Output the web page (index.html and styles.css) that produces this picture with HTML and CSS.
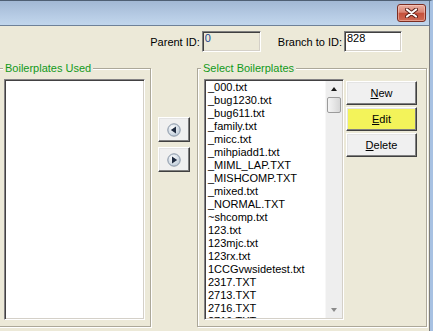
FILE: index.html
```html
<!DOCTYPE html>
<html lang="en">
<head>
    <meta charset="UTF-8">
    <title>Boilerplates</title>
    <link rel="stylesheet" href="styles.css">
</head>
<body>
<div class="window">
    <div class="titlebar">
        <button class="close" title="Close">
            <svg width="13" height="10" viewBox="0 0 13 10">
                <path d="M2 1.5 L11 8.5 M11 1.5 L2 8.5" stroke="#5a1e16" stroke-width="4" stroke-linecap="round"/>
                <path d="M2 1.5 L11 8.5 M11 1.5 L2 8.5" stroke="#ffffff" stroke-width="2.2" stroke-linecap="round"/>
            </svg>
        </button>
    </div>
    <div class="client">
        <div class="idrow">
            <label for="parentId">Parent ID:</label>
            <input type="text" id="parentId" class="idbox parent" value="0" readonly>
            <label for="branchId" class="branch-label">Branch to ID:</label>
            <input type="text" id="branchId" class="idbox branch" value="828">
        </div>
        <div class="groups">
            <fieldset class="group used">
                <legend>Boilerplates Used</legend>
                <div class="listbox"></div>
            </fieldset>
            <div class="movers">
                <button class="mover">
                    <svg width="14" height="14" viewBox="0 0 14 14">
                        <defs>
                            <radialGradient id="ball1" cx="0.4" cy="0.35" r="0.7">
                                <stop offset="0" stop-color="#ffffff"/>
                                <stop offset="1" stop-color="#b9c7d6"/>
                            </radialGradient>
                        </defs>
                        <circle cx="7" cy="7" r="6.2" fill="url(#ball1)" stroke="#8895a5"/>
                        <path d="M3.8 7 L9 3.6 L9 10.4 Z" fill="#1f2b40"/>
                    </svg>
                </button>
                <button class="mover">
                    <svg width="14" height="14" viewBox="0 0 14 14">
                        <defs>
                            <radialGradient id="ball2" cx="0.4" cy="0.35" r="0.7">
                                <stop offset="0" stop-color="#ffffff"/>
                                <stop offset="1" stop-color="#b9c7d6"/>
                            </radialGradient>
                        </defs>
                        <circle cx="7" cy="7" r="6.2" fill="url(#ball2)" stroke="#8895a5"/>
                        <path d="M10.2 7 L5 3.6 L5 10.4 Z" fill="#1f2b40"/>
                    </svg>
                </button>
            </div>
            <fieldset class="group select">
                <legend>Select Boilerplates</legend>
                <div class="group-body">
                    <div class="listbox files">
                        <ul class="items">
                            <li>_000.txt</li>
                            <li>_bug1230.txt</li>
                            <li>_bug611.txt</li>
                            <li>_family.txt</li>
                            <li>_micc.txt</li>
                            <li>_mihpiadd1.txt</li>
                            <li>_MIML_LAP.TXT</li>
                            <li>_MISHCOMP.TXT</li>
                            <li>_mixed.txt</li>
                            <li>_NORMAL.TXT</li>
                            <li>~shcomp.txt</li>
                            <li>123.txt</li>
                            <li>123mjc.txt</li>
                            <li>123rx.txt</li>
                            <li>1CCGvwsidetest.txt</li>
                            <li>2317.TXT</li>
                            <li>2713.TXT</li>
                            <li>2716.TXT</li>
                            <li>2719.TXT</li>
                        </ul>
                        <div class="scroll">
                            <div class="arrow up"></div>
                            <div class="thumb"></div>
                            <div class="track"></div>
                            <div class="arrow down"></div>
                        </div>
                    </div>
                    <div class="actions">
                        <button class="btn"><u>N</u>ew</button>
                        <button class="btn edit"><u>E</u>dit</button>
                        <button class="btn"><u>D</u>elete</button>
                    </div>
                </div>
            </fieldset>
        </div>
    </div>
</div>
</body>
</html>
```

FILE: styles.css
```css
body{
    margin: 0;
    font-family: "Liberation Sans", Arial, sans-serif;
    font-size: 11px;
    background: #ece9d8;
    overflow: hidden;
}
.window{
    width: 433px;
    height: 331px;
    box-sizing: border-box;
    display: flex;
    flex-direction: column;
    border-top: 1px solid #4f5f73;
    border-right: 3px solid #a7c1e2;
}
.titlebar{
    display: flex;
    justify-content: flex-end;
    align-items: flex-start;
    padding: 3px 3px 0 0;
    box-sizing: border-box;
    height: 25px;
    background: linear-gradient(#a2b8d4, #b6cbe4 60%, #c1d6ec);
    border-bottom: 1px solid #6e8198;
    border-right: 1px solid #5f7087;
}
.close{
    width: 29px;
    height: 18px;
    padding: 0;
    border: 1px solid #7b2d22;
    border-radius: 3px;
    background: linear-gradient(#eab0a2, #d98474 45%, #c5503b 52%, #cf6a55);
    box-shadow: inset 0 0 0 1px rgba(255, 220, 210, 0.45);
    display: flex;
    align-items: center;
    justify-content: center;
}
.client{
    flex: 1;
    border-right: 1px solid #7c7c7c;
}
.idrow{
    display: flex;
    justify-content: flex-end;
    align-items: center;
    padding: 5px 27px 0 0;
}
.idrow label{
    margin-right: 2px;
    color: #000;
}
.branch-label{
    margin-left: 17px;
}
.idbox{
    box-sizing: border-box;
    height: 21px;
    margin: 0;
    padding: 0 2px 8px 2px;
    font-family: "Liberation Sans", Arial, sans-serif;
    font-size: 11px;
    line-height: 13px;
    border-style: solid;
    border-width: 1px;
    border-color: #808080 #ffffff #ffffff #808080;
    box-shadow: inset 1px 1px 0 #404040, inset -1px -1px 0 #d4d0c8;
    outline: none;
}
.parent{
    width: 59px;
    background: #ece9d8;
    color: #23478f;
}
.branch{
    width: 58px;
    background: #fff;
    color: #000;
}
.groups{
    display: flex;
    align-items: flex-start;
    margin-top: 10px;
}
.group{
    margin: 0;
    min-width: 0;
    box-sizing: border-box;
    border: 1px solid #aca899;
    box-shadow: 1px 1px 0 #fff, inset 1px 1px 0 #fff;
}
.group legend{
    padding: 0 2px;
    line-height: 13px;
    color: #12991a;
    background: #ece9d8;
}
.used{
    width: 153px;
    margin-left: -2px;
    padding: 4px 5px 6px 5px;
}
.used legend{
    margin-left: -1px;
}
.select{
    width: 230px;
    padding: 4px 9px 6px 6px;
}
.select legend{
    margin-left: -3px;
}
.listbox{
    box-sizing: border-box;
    height: 241px;
    background: #fff;
    border-style: solid;
    border-width: 1px;
    border-color: #848284 #ffffff #ffffff #848284;
    box-shadow: inset 1px 1px 0 #424142, inset -1px -1px 0 #d4d0c8;
}
.group-body{
    display: flex;
    align-items: flex-start;
}
.files{
    width: 140px;
    display: flex;
    padding: 1px;
    overflow: hidden;
}
.items{
    flex: 1;
    list-style: none;
    margin: 0;
    padding: 0 0 0 2px;
    overflow: hidden;
    color: #000;
}
.items li{
    line-height: 13px;
    height: 13px;
    white-space: nowrap;
}
.scroll{
    width: 17px;
    display: flex;
    flex-direction: column;
    align-items: center;
    background: #eeeeee;
    border-left: 1px solid #f7f7f7;
    box-sizing: border-box;
}
.arrow{
    height: 16px;
    width: 15px;
    display: flex;
    align-items: center;
    justify-content: center;
}
.arrow::before{
    content: "";
    border-left: 3.5px solid transparent;
    border-right: 3.5px solid transparent;
}
.up::before{
    border-bottom: 4px solid #1a1a1a;
}
.down::before{
    border-top: 4px solid #8a8a8a;
}
.thumb{
    width: 14px;
    height: 16px;
    box-sizing: border-box;
    border: 1px solid #9b9b9b;
    border-radius: 2px;
    background: linear-gradient(90deg, #f4f4f4, #e6e6e6 50%, #d6d6d6);
}
.track{
    flex: 1;
}
.actions{
    display: flex;
    flex-direction: column;
    gap: 2px;
    margin: 2px 0 0 2px;
}
.btn, .mover{
    box-sizing: border-box;
    padding: 0;
    font-family: "Liberation Sans", Arial, sans-serif;
    font-size: 11px;
    color: #000;
    background: #f0f0f0;
    border-style: solid;
    border-width: 1px;
    border-color: #ffffff #404040 #404040 #ffffff;
    box-shadow: inset -1px -1px 0 #808080, inset 1px 1px 0 #e4e4e4;
}
.btn{
    width: 71px;
    height: 24px;
}
.edit{
    background: #f3f35a;
}
.movers{
    display: flex;
    flex-direction: column;
    gap: 5px;
    margin: 55px 7px 0 7px;
}
.mover{
    width: 32px;
    height: 25px;
    display: flex;
    align-items: center;
    justify-content: center;
}
```
